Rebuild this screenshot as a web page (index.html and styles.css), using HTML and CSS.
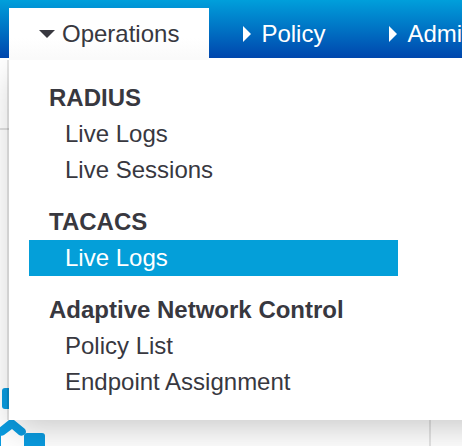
FILE: index.html
```html
<!DOCTYPE html>
<html lang="en">
<head>
<meta charset="utf-8">
<title>Operations</title>
<link rel="stylesheet" href="styles.css">
</head>
<body>
<nav class="bar">
  <div class="tab tab-open">
    <button class="tab-button" type="button" aria-expanded="true"><svg class="caret-down" width="16" height="8" viewBox="0 0 16 8" aria-hidden="true"><path d="M0 0H16L8 8Z"/></svg>Operations</button>
    <div class="menu">
      <section class="group">
        <h2 class="heading">RADIUS</h2>
        <a class="link" href="#">Live Logs</a>
        <a class="link" href="#">Live Sessions</a>
      </section>
      <section class="group">
        <h2 class="heading">TACACS</h2>
        <a class="link link-active" href="#">Live Logs</a>
      </section>
      <section class="group">
        <h2 class="heading">Adaptive Network Control</h2>
        <a class="link" href="#">Policy List</a>
        <a class="link" href="#">Endpoint Assignment</a>
      </section>
    </div>
  </div>
  <div class="tab"><button class="tab-button" type="button"><svg class="caret-right" width="8" height="16" viewBox="0 0 8 16" aria-hidden="true"><path d="M0 0L8 8L0 16Z"/></svg>Policy</button></div>
  <div class="tab tab-last"><button class="tab-button" type="button"><svg class="caret-right" width="8" height="16" viewBox="0 0 8 16" aria-hidden="true"><path d="M0 0L8 8L0 16Z"/></svg>Admi</button></div>
</nav>
<main class="page">
  <div class="page-header"></div>
  <div class="page-body">
    <div class="column">
      <svg class="network" width="48" height="60" viewBox="0 0 48 60" aria-hidden="true">
        <rect x="2" y="2" width="20" height="21" rx="3"/>
        <path class="hub" d="M0 60V48L12 40L24 48V60Z"/>
        <rect x="24" y="47" width="21" height="21" rx="3"/>
        <path d="M-1 60V47H1V60Z"/>
        <path d="M9 20V31L14 34L25 43Q27 46 25 48Q22 51 19 49L12 43L4 49Q1 51 -2 48V43L9 34Z"/>
      </svg>
    </div>
    <div class="column"></div>
  </div>
</main>
</body>
</html>
```
FILE: styles.css
```css
* {
  box-sizing: border-box;
}

body {
  margin: 0;
  min-height: 100vh;
  display: flex;
  flex-direction: column;
  overflow: hidden;
  background: #fff;
  color: #3a3a3c;
  font: 24px/36px "Liberation Sans", Arial, sans-serif;
}

.bar {
  display: flex;
  gap: 4px;
  padding: 8px 0 0 9px;
  background: linear-gradient(#009fdb, #0046ad);
}

.tab {
  flex: none;
  color: #fff;
}

.tab-last {
  flex: 1 1 0;
  min-width: 0;
  overflow: hidden;
}

.tab-open {
  position: relative;
  background: linear-gradient(#fff 60%, #fafafa);
  color: #38383f;
}

.tab-button {
  display: flex;
  align-items: center;
  height: 50px;
  padding: 2px 30px 0;
  border: 0;
  background: none;
  color: inherit;
  font: inherit;
  white-space: nowrap;
}

.tab-button svg {
  flex: none;
  fill: currentColor;
}

.caret-down {
  margin-right: 7px;
}

.caret-right {
  margin-right: 10px;
}

.menu {
  position: absolute;
  z-index: 1;
  top: 52px;
  left: 0;
  display: grid;
  grid-template-columns: 369px;
  gap: 16px;
  width: 110vw;
  padding: 20px;
  background: #fff;
  box-shadow: -2px 0 0 rgba(0, 0, 0, 0.1), 0 12px 32px -4px rgba(0, 0, 0, 0.22);
  clip-path: inset(0 -60px -60px -60px);
}

.tab-open::after {
  content: "";
  position: absolute;
  top: 50px;
  left: 0;
  width: 100%;
  height: 2px;
  background: #fafafa;
}

.heading {
  margin: 0;
  padding-left: 20px;
  font-size: 24px;
  font-weight: bold;
}

.link {
  display: block;
  padding-left: 36px;
  color: inherit;
  text-decoration: none;
}

.link-active {
  background: #049fd9;
  color: #fff;
}

.page {
  flex: 1;
  display: flex;
  flex-direction: column;
}

.page-header {
  height: 72px;
  border-bottom: 2px solid #e0e0e0;
}

.page-body {
  flex: 1;
  display: grid;
  grid-template-columns: 1fr 33px;
}

.column {
  display: flex;
  align-items: flex-end;
}

.column + .column {
  border-left: 2px solid #e4e4e4;
}

.network {
  fill: #0a9bdf;
}

.hub {
  fill: #fff;
}
```
